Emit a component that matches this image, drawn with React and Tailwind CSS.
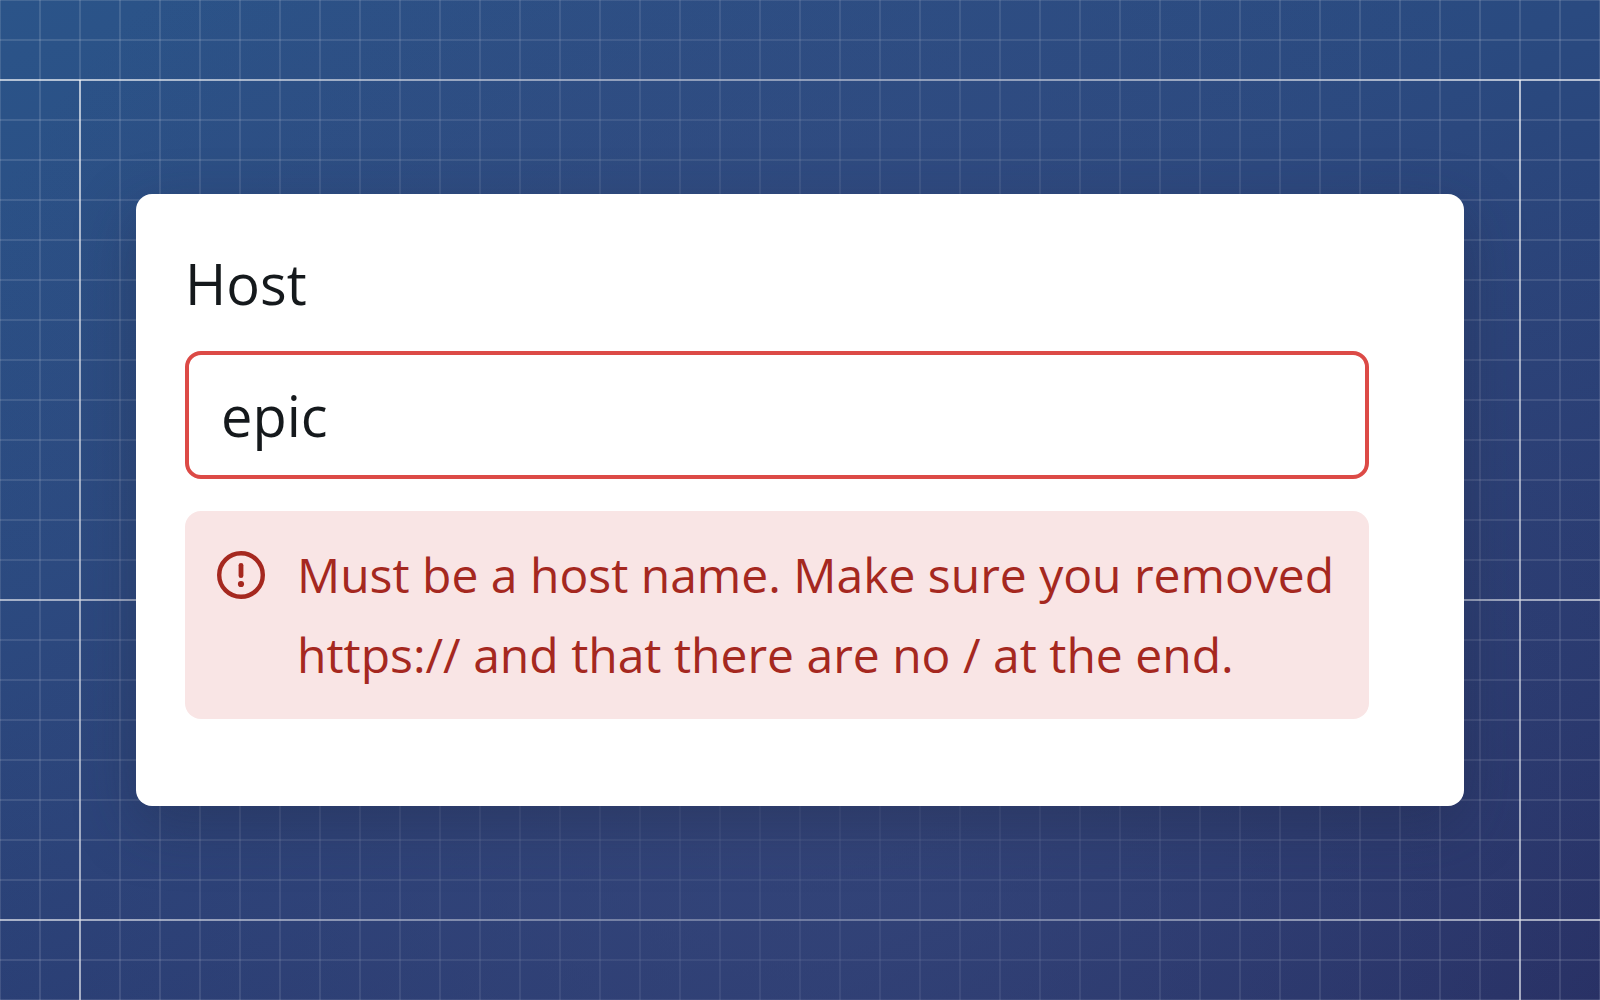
import { useState } from 'react';

function AlertIcon() {
	return (
		<svg className="mt-4 size-12 shrink-0" viewBox="0 0 48 48" fill="none" aria-hidden="true">
			<circle cx="24" cy="24" r="21.8" stroke="currentColor" strokeWidth="4.4" />
			<path d="M24 14.3v10.4" stroke="currentColor" strokeWidth="4.8" strokeLinecap="round" />
			<circle cx="24" cy="33" r="3.1" fill="currentColor" />
		</svg>
	);
}

function BlueprintBackground() {
	return (
		<div
			className="absolute inset-0 grid bg-[linear-gradient(160deg,#2b5489_0%,#2a4a80_37%,#2a3f75_63%,#283064_100%)] *:col-start-1 *:row-start-1"
			aria-hidden="true"
		>
			{/* fine 40px grid */}
			<div className="bg-[linear-gradient(to_right,rgba(255,255,255,0.12)_2px,transparent_2px),linear-gradient(to_bottom,rgba(255,255,255,0.12)_2px,transparent_2px)] bg-[size:40px_40px] bg-[position:-1px_-1px]" />
			{/* guide lines */}
			<div className="py-[79px]">
				<div className="h-full border-y-2 border-white/60" />
			</div>
			<div className="pt-0.5">
				<div className="h-3/5 border-b-2 border-white/60" />
			</div>
			<div className="px-[79px] pt-20">
				<div className="h-full border-x-2 border-white/60" />
			</div>
			{/* centre tint */}
			<div className="bg-[radial-gradient(ellipse_58%_93%_at_50%_65%,rgba(56,73,126,0.78)_0%,rgba(56,73,126,0)_100%)]" />
		</div>
	);
}

export default function App() {
	const [host, setHost] = useState('epic');

	return (
		<main className="relative flex min-h-screen items-center px-[136px] font-['Open_Sans','Noto_Sans',sans-serif]">
			<BlueprintBackground />

			<div className="relative w-full rounded-2xl bg-white pt-[49px] pr-[95px] pb-[87px] pl-[49px] shadow-[0_20px_60px_rgba(32,36,64,0.35)]">
				<label htmlFor="host" className="mb-7 block text-[56px] leading-[80px] text-[#15191c]">
					Host
				</label>
				<input
					id="host"
					type="text"
					value={host}
					onChange={(e) => setHost(e.target.value)}
					aria-invalid="true"
					aria-describedby="host-error"
					className="block h-32 w-full rounded-2xl border-4 border-[#dc4a46] bg-white px-8 text-[56px] text-[#15191c] outline-none"
				/>
				<div
					id="host-error"
					role="alert"
					className="mt-8 flex gap-8 rounded-2xl bg-[#f9e5e5] py-6 pr-6 pl-8 text-[48px] leading-[80px] text-[#a5281f]"
				>
					<AlertIcon />
					<p>Must be a host name. Make sure you removed https:// and that there are no / at the end.</p>
				</div>
			</div>
		</main>
	);
}
